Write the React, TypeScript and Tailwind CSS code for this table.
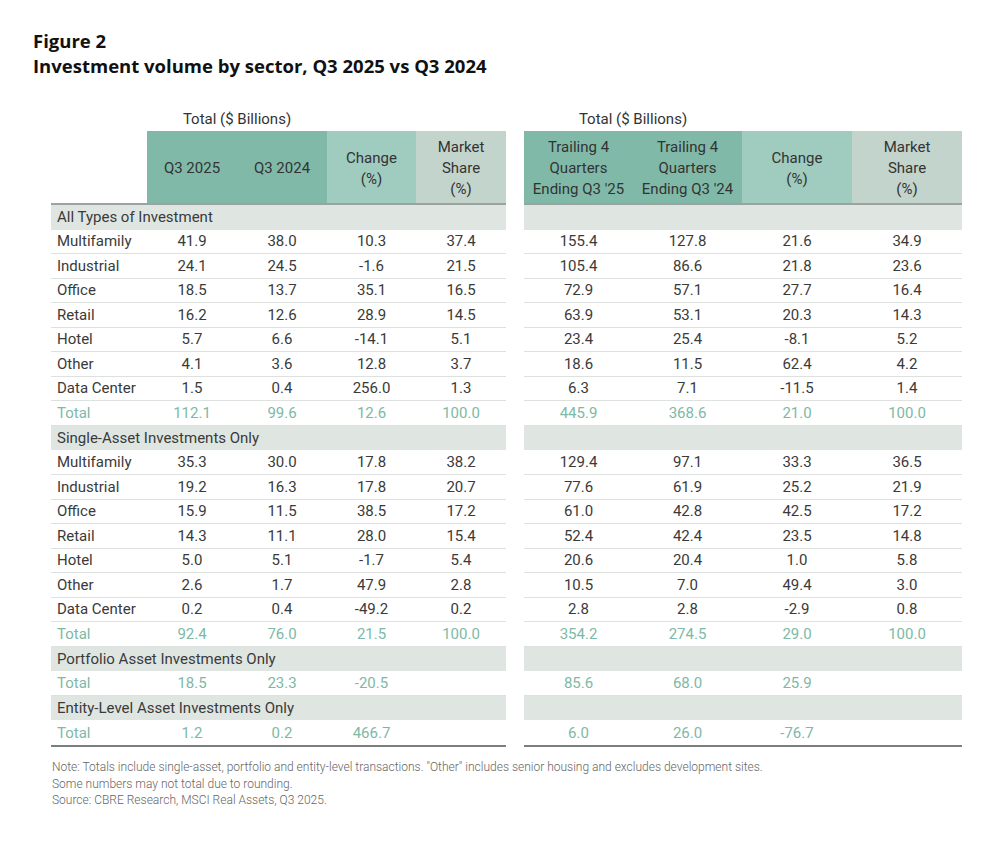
import React from "react";

type Row =
  | { kind: "section"; label: string }
  | { kind: "data"; label: string; l: string[]; r: string[] }
  | { kind: "total"; label: string; l: string[]; r: string[] };

const rows: Row[] = [
  { kind: "section", label: "All Types of Investment" },
  { kind: "data", label: "Multifamily", l: ["41.9", "38.0", "10.3", "37.4"], r: ["155.4", "127.8", "21.6", "34.9"] },
  { kind: "data", label: "Industrial", l: ["24.1", "24.5", "-1.6", "21.5"], r: ["105.4", "86.6", "21.8", "23.6"] },
  { kind: "data", label: "Office", l: ["18.5", "13.7", "35.1", "16.5"], r: ["72.9", "57.1", "27.7", "16.4"] },
  { kind: "data", label: "Retail", l: ["16.2", "12.6", "28.9", "14.5"], r: ["63.9", "53.1", "20.3", "14.3"] },
  { kind: "data", label: "Hotel", l: ["5.7", "6.6", "-14.1", "5.1"], r: ["23.4", "25.4", "-8.1", "5.2"] },
  { kind: "data", label: "Other", l: ["4.1", "3.6", "12.8", "3.7"], r: ["18.6", "11.5", "62.4", "4.2"] },
  { kind: "data", label: "Data Center", l: ["1.5", "0.4", "256.0", "1.3"], r: ["6.3", "7.1", "-11.5", "1.4"] },
  { kind: "total", label: "Total", l: ["112.1", "99.6", "12.6", "100.0"], r: ["445.9", "368.6", "21.0", "100.0"] },
  { kind: "section", label: "Single-Asset Investments Only" },
  { kind: "data", label: "Multifamily", l: ["35.3", "30.0", "17.8", "38.2"], r: ["129.4", "97.1", "33.3", "36.5"] },
  { kind: "data", label: "Industrial", l: ["19.2", "16.3", "17.8", "20.7"], r: ["77.6", "61.9", "25.2", "21.9"] },
  { kind: "data", label: "Office", l: ["15.9", "11.5", "38.5", "17.2"], r: ["61.0", "42.8", "42.5", "17.2"] },
  { kind: "data", label: "Retail", l: ["14.3", "11.1", "28.0", "15.4"], r: ["52.4", "42.4", "23.5", "14.8"] },
  { kind: "data", label: "Hotel", l: ["5.0", "5.1", "-1.7", "5.4"], r: ["20.6", "20.4", "1.0", "5.8"] },
  { kind: "data", label: "Other", l: ["2.6", "1.7", "47.9", "2.8"], r: ["10.5", "7.0", "49.4", "3.0"] },
  { kind: "data", label: "Data Center", l: ["0.2", "0.4", "-49.2", "0.2"], r: ["2.8", "2.8", "-2.9", "0.8"] },
  { kind: "total", label: "Total", l: ["92.4", "76.0", "21.5", "100.0"], r: ["354.2", "274.5", "29.0", "100.0"] },
  { kind: "section", label: "Portfolio Asset Investments Only" },
  { kind: "total", label: "Total", l: ["18.5", "23.3", "-20.5", ""], r: ["85.6", "68.0", "25.9", ""] },
  { kind: "section", label: "Entity-Level Asset Investments Only" },
  { kind: "total", label: "Total", l: ["1.2", "0.2", "466.7", ""], r: ["6.0", "26.0", "-76.7", ""] },
];

const LW = ["w-[90px]", "w-[90px]", "w-[89px]", "w-[90px]"];
const RW = ["w-[109px]", "w-[109px]", "w-[110px]", "w-[110px]"];

function LeftTable() {
  return (
    <div className="w-[455px] flex flex-col">
      <div className="flex h-[23px] items-center">
        <div className="w-[96px]" />
        <div className="w-[180px] text-center text-[15px] text-[#333]">Total ($ Billions)</div>
      </div>
      <div className="flex h-[74px] border-b-2 border-[#9aa39f] text-[15px] leading-[21px] text-[#333] text-center">
        <div className="w-[96px]" />
        <div className="w-[180px] flex bg-[#80b9a8] pt-[3px]">
          <div className="w-[90px] flex items-center justify-center">Q3 2025</div>
          <div className="w-[90px] flex items-center justify-center">Q3 2024</div>
        </div>
        <div className="w-[89px] flex items-center justify-center bg-[#a0cbbf] pt-[3px]">
          <div>Change<br />(%)</div>
        </div>
        <div className="w-[90px] flex items-center justify-center bg-[#c3d4cc] pt-[3px]">
          <div>Market<br />Share<br />(%)</div>
        </div>
      </div>
      {rows.map((r, i) => {
        if (r.kind === "section") {
          return (
            <div key={i} className="h-[24.55px] bg-[#dfe6e2] flex items-center pl-[6px] text-[15px] text-[#3a3a3a]">
              {r.label}
            </div>
          );
        }
        const isTotal = r.kind === "total";
        const last = i === rows.length - 1;
        return (
          <div
            key={i}
            className={`h-[24.55px] flex items-center text-[15px] ${isTotal ? "text-[#7db9a6]" : "text-[#3a3a3a]"} ${last ? "" : "border-b border-[#dde1df]"}`}
          >
            <div className="w-[96px] pl-[6px]">{r.label}</div>
            {r.l.map((v, j) => (
              <div key={j} className={`${LW[j]} text-center`}>{v}</div>
            ))}
          </div>
        );
      })}
      <div className="h-[2px] bg-[#7a7f7d]" />
    </div>
  );
}

function RightTable() {
  return (
    <div className="w-[438px] flex flex-col">
      <div className="flex h-[23px] items-center">
        <div className="w-[218px] text-center text-[15px] text-[#333]">Total ($ Billions)</div>
      </div>
      <div className="flex h-[74px] border-b-2 border-[#9aa39f] text-[15px] leading-[21px] text-[#333] text-center">
        <div className="w-[218px] flex bg-[#80b9a8] pt-[3px]">
          <div className="w-[109px] flex items-center justify-center">
            <div>Trailing 4<br />Quarters<br />Ending Q3 '25</div>
          </div>
          <div className="w-[109px] flex items-center justify-center">
            <div>Trailing 4<br />Quarters<br />Ending Q3 '24</div>
          </div>
        </div>
        <div className="w-[110px] flex items-center justify-center bg-[#a0cbbf] pt-[3px]">
          <div>Change<br />(%)</div>
        </div>
        <div className="w-[110px] flex items-center justify-center bg-[#c3d4cc] pt-[3px]">
          <div>Market<br />Share<br />(%)</div>
        </div>
      </div>
      {rows.map((r, i) => {
        if (r.kind === "section") {
          return <div key={i} className="h-[24.55px] bg-[#dfe6e2]" />;
        }
        const isTotal = r.kind === "total";
        const last = i === rows.length - 1;
        return (
          <div
            key={i}
            className={`h-[24.55px] flex items-center text-[15px] ${isTotal ? "text-[#7db9a6]" : "text-[#3a3a3a]"} ${last ? "" : "border-b border-[#dde1df]"}`}
          >
            {r.r.map((v, j) => (
              <div key={j} className={`${RW[j]} text-center`}>{v}</div>
            ))}
          </div>
        );
      })}
      <div className="h-[2px] bg-[#7a7f7d]" />
    </div>
  );
}

export default function App() {
  return (
    <div className="w-[1000px] h-[842px] bg-white" style={{ fontFamily: "Roboto, 'Liberation Sans', sans-serif" }}>
      <div className="pl-[33px] pt-[28px] text-[18.5px] leading-[25px] font-bold text-[#111]" style={{ fontFamily: "'Open Sans', sans-serif" }}>
        <div>Figure 2</div>
        <div>Investment volume by sector, Q3 2025 vs Q3 2024</div>
      </div>
      <div className="flex pl-[51px] gap-[18px] mt-[30px]">
        <LeftTable />
        <RightTable />
      </div>
      <div className="pl-[52px] mt-[12px] text-[12px] leading-[16.5px] text-[#666] font-light">
        <div>Note: Totals include single-asset, portfolio and entity-level transactions. "Other" includes senior housing and excludes development sites.</div>
        <div>Some numbers may not total due to rounding.</div>
        <div>Source: CBRE Research, MSCI Real Assets, Q3 2025.</div>
      </div>
    </div>
  );
}
